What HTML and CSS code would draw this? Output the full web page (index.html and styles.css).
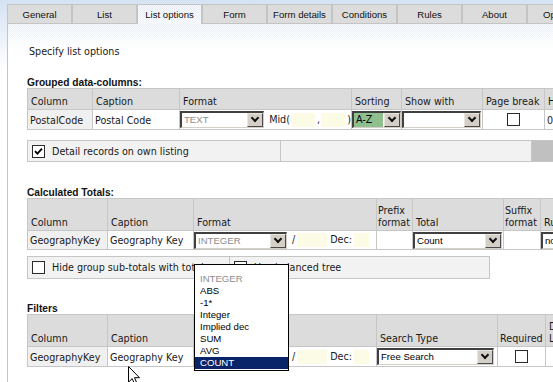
FILE: index.html
```html
<!DOCTYPE html>
<html lang="en">
<head>
  <meta charset="UTF-8" />
  <title>List options</title>
  <link rel="stylesheet" href="styles.css">
</head>
<body>
  <ul class="tabs">
    <li>General</li>
    <li>List</li>
    <li class="active">List options</li>
    <li>Form</li>
    <li>Form details</li>
    <li>Conditions</li>
    <li>Rules</li>
    <li>About</li>
    <li>Options</li>
  </ul>

  <div class="panel">
    <p class="intro">Specify list options</p>

    <h3>Grouped data-columns:</h3>
    <table class="grid grouped">
      <colgroup><col><col><col><col><col><col><col></colgroup>
      <tr class="head">
        <th>Column</th><th>Caption</th><th>Format</th><th>Sorting</th><th>Show with</th><th>Page break</th><th>Hide</th>
      </tr>
      <tr>
        <td class="key">PostalCode</td>
        <td>Postal Code</td>
        <td class="ctl">
          <div class="fmt">
            <span class="sel w87 dim"><span class="val">TEXT</span><span class="btn"></span></span>
            <span class="lbl">Mid(</span><span class="box b25"></span><span>,</span><span class="box b25"></span><span>)</span>
          </div>
        </td>
        <td class="ctl"><span class="sel w49 sort"><span class="val">A-Z</span><span class="btn"></span></span></td>
        <td class="ctl"><span class="sel w79"><span class="val"></span><span class="btn"></span></span></td>
        <td class="ctl mid"><span class="cb"></span></td>
        <td>0</td>
      </tr>
    </table>

    <table class="bar bar-detail">
      <tr>
        <td><label class="check"><span class="cb"><svg width="9" height="9" viewBox="0 0 9 9"><path d="M1 4.2 L3.4 6.6 L8 1.6" stroke="#000" stroke-width="1.8" fill="none"/></svg></span>Detail records on own listing</label></td>
        <td></td>
        <td class="shade"></td>
      </tr>
    </table>

    <h3 class="gap-totals">Calculated Totals:</h3>
    <table class="grid totals">
      <colgroup><col><col><col><col><col><col><col></colgroup>
      <tr class="head">
        <th>Column</th><th>Caption</th><th>Format</th><th>Prefix<br>format</th><th>Total</th><th>Suffix<br>format</th><th>Running</th>
      </tr>
      <tr>
        <td class="key">GeographyKey</td>
        <td>Geography Key</td>
        <td class="ctl">
          <div class="fmt">
            <span class="sel w93 dim"><span class="val">INTEGER</span><span class="btn"></span></span>
            <span class="lbl">/</span><span class="box b30"></span><span class="lbl dec">Dec:</span><span class="box b15"></span>
          </div>
        </td>
        <td></td>
        <td class="ctl"><span class="sel w89"><span class="val">Count</span><span class="btn"></span></span></td>
        <td></td>
        <td class="ctl"><span class="sel w60"><span class="val">none</span><span class="btn"></span></span></td>
      </tr>
    </table>

    <table class="bar bar-hide">
      <tr>
        <td><label class="check"><span class="cb"></span>Hide group sub-totals with totals</label></td>
        <td><label class="check"><span class="cb"></span>Use balanced tree</label></td>
      </tr>
    </table>

    <h3 class="gap-filters">Filters</h3>
    <table class="grid filters">
      <colgroup><col><col><col><col><col><col></colgroup>
      <tr class="head">
        <th>Column</th><th>Caption</th><th>Format</th><th>Search Type</th><th>Required</th><th>Drop<br>List</th>
      </tr>
      <tr>
        <td class="key">GeographyKey</td>
        <td>Geography Key</td>
        <td class="ctl">
          <div class="fmt">
            <span class="sel w93 dim"><span class="val">INTEGER</span><span class="btn"></span></span>
            <span class="lbl">/</span><span class="box b30"></span><span class="lbl dec">Dec:</span><span class="box b15"></span>
          </div>
        </td>
        <td class="ctl"><span class="sel w117"><span class="val">Free Search</span><span class="btn"></span></span></td>
        <td class="ctl mid"><span class="cb"></span></td>
        <td></td>
      </tr>
    </table>
  </div>

  <ul class="droplist">
    <li class="dim">INTEGER</li>
    <li>ABS</li>
    <li>-1*</li>
    <li>Integer</li>
    <li>Implied dec</li>
    <li>SUM</li>
    <li>AVG</li>
    <li class="on">COUNT</li>
  </ul>

  <svg class="cursor" width="13" height="20" viewBox="0 0 13 20">
    <path d="M0.5 0.5 V16.2 L4.2 12.6 L6.7 18.4 L9 17.4 L6.5 11.7 H11.5 Z" fill="#fff" stroke="#000" stroke-linejoin="miter"/>
  </svg>
</body>
</html>
```

FILE: styles.css
```css
html, body {
  margin: 0;
  overflow: hidden;
}
body {
  position: relative;
  height: 382px;
  background: linear-gradient(#d5e2f3, #ffffff 70px);
  font-family: "DejaVu Sans", sans-serif;
  font-size: 9.6px;
  color: #1a1a1a;
}

/* tab strip */
.tabs {
  display: flex;
  align-items: flex-end;
  list-style: none;
  margin: 0;
  padding: 4px 0 0 7px;
  white-space: nowrap;
}
.tabs li {
  flex: none;
  width: 63px;
  height: 18px;
  border: 1px solid #c4c4c4;
  border-bottom: 0;
  background: #dcdcdc;
  text-align: center;
  font: 9.6px/19px "Liberation Sans", sans-serif;
  color: #111;
}
.tabs li.active {
  position: relative;
  z-index: 1;
  height: 19px;
  margin-bottom: -1px;
  background:
    linear-gradient(rgba(255,255,255,0), rgba(255,255,255,0.4)),
    repeating-conic-gradient(#e3eaf4 0 25%, #f8fafd 0 50%) 0 0/2px 2px;
}

/* content panel */
.panel {
  height: 358px;
  margin-left: 7px;
  padding-left: 19px;
  border-top: 1px solid #c4c4c4;
  border-left: 1px solid #c4c4c4;
  background:
    linear-gradient(rgba(255,255,255,0.2), #ffffff 26px),
    repeating-conic-gradient(#e3eaf4 0 25%, #f8fafd 0 50%) 0 0/2px 2px;
}
.intro {
  margin: 22px 0 0 2px;
  line-height: 12px;
}
h3 {
  margin: 19px 0 0;
  font: bold 10.2px/11px "Liberation Sans", sans-serif;
  color: #111;
}
h3.gap-totals { margin-top: 25px; }
h3.gap-filters { margin-top: 24px; }

/* data grids */
.grid {
  border-collapse: collapse;
  table-layout: fixed;
}
.grid th, .grid td {
  border: 1px solid #c6c6c6;
  padding: 0 2px;
  white-space: nowrap;
  overflow: hidden;
  text-align: left;
  font-weight: normal;
  line-height: 12px;
}
.grid th {
  background: #dcdcdc;
  vertical-align: bottom;
  padding: 0 3px 1px 3px;
}
.grid td {
  height: 17px;
  padding-bottom: 2px;
  background: #fff;
  vertical-align: bottom;
}
.grid td.key { background: #f0f0f0; }
.grid td.ctl { padding: 0; vertical-align: middle; }
.grid td.mid { text-align: center; }

.grouped { width: 562px; }
.grouped .head th { height: 19px; }
.grouped col:nth-child(1) { width: 65px; }
.grouped col:nth-child(2) { width: 87px; }
.grouped col:nth-child(3) { width: 172px; }
.grouped col:nth-child(4) { width: 50px; }
.grouped col:nth-child(5) { width: 81px; }
.grouped col:nth-child(6) { width: 62px; }
.grouped col:nth-child(7) { width: 45px; }

.totals { width: 558px; }
.totals .head th { height: 30px; }
.totals td { height: 16px; }
.totals col:nth-child(1) { width: 80px; }
.totals col:nth-child(2) { width: 86px; }
.totals col:nth-child(3) { width: 183px; }
.totals col:nth-child(4) { width: 36px; }
.totals col:nth-child(5) { width: 91px; }
.totals col:nth-child(6) { width: 37px; }
.totals col:nth-child(7) { width: 45px; }
.totals .head th:nth-child(4),
.totals .head th:nth-child(6) { padding-left: 1px; padding-right: 0; }

.filters { width: 563px; }
.filters .head th { height: 30px; }
.filters col:nth-child(1) { width: 80px; }
.filters col:nth-child(2) { width: 86px; }
.filters col:nth-child(3) { width: 183px; }
.filters col:nth-child(4) { width: 121px; }
.filters col:nth-child(5) { width: 48px; }
.filters col:nth-child(6) { width: 45px; }
.filters .head th:nth-child(5) { padding-left: 2px; padding-right: 0; }

/* format cell: select + extra inputs */
.fmt {
  display: flex;
  align-items: center;
}
.fmt .lbl { margin-left: 5px; }
.fmt .dec { margin: 0 2px 0 3px; }
.box {
  display: inline-block;
  height: 14px;
  background: #fcfbe6;
}
.b25 { width: 25px; margin: 0 2px 0 1px; }
.b30 { width: 30px; margin-left: 2px; }
.b15 { width: 15px; }

/* classic combo box */
.sel {
  display: inline-flex;
  vertical-align: middle;
  box-sizing: border-box;
  height: 17px;
  border-style: solid;
  border-width: 2px 1px 1px 2px;
  border-color: #404040 #d4d0c8 #d4d0c8 #404040;
  background: #fff;
  font: 9.6px/14px "Liberation Sans", sans-serif;
  color: #000;
}
.sel .val {
  flex: 1;
  padding-left: 2px;
  overflow: hidden;
}
.sel.dim .val { color: #8c8c8c; }
.sel.sort .val {
  background: #8fbf8f;
  font-family: "DejaVu Sans", sans-serif;
  margin-right: 1px;
}
.sel .btn {
  flex: none;
  position: relative;
  width: 16px;
  box-sizing: border-box;
  border: 1px solid #4a4a4a;
  border-top-color: #e8e6e0;
  border-left-color: #e8e6e0;
  background: #d4d0c8;
}
.sel .btn::after {
  content: "";
  position: absolute;
  left: 4px;
  top: 1px;
  width: 4px;
  height: 4px;
  border-right: 2px solid #111;
  border-bottom: 2px solid #111;
  transform: rotate(45deg);
}
.w87 { width: 87px; }
.w49 { width: 49px; }
.w79 { width: 79px; }
.w93 { width: 93px; }
.w89 { width: 89px; }
.w60 { width: 60px; }
.w117 { width: 117px; }

/* checkboxes */
.cb {
  display: inline-flex;
  align-items: center;
  justify-content: center;
  vertical-align: middle;
  width: 11px;
  height: 11px;
  border: 1px solid #2a2a2a;
  background: #fff;
}
.check {
  display: flex;
  align-items: center;
  white-space: nowrap;
}
.check .cb { margin-right: 7px; }

/* option bars */
.bar {
  border-collapse: collapse;
  table-layout: fixed;
  background: #f2f2f2;
}
.bar td {
  height: 20px;
  padding: 0 0 0 4px;
  border: 1px solid #c6c6c6;
  overflow: hidden;
}
.bar-detail { margin-top: 10px; width: 600px; }
.bar-detail td:nth-child(1) { width: 248px; }
.bar-detail td:nth-child(2) { width: 246px; }
.bar-detail td.shade { background: #c0c0c0; }
.bar-hide { margin-top: 6px; width: 463px; }
.bar-hide td { height: 21px; }
.bar-hide td:nth-child(1) { width: 197px; }

/* open dropdown list */
.droplist {
  position: absolute;
  left: 194px;
  top: 264px;
  width: 93px;
  height: 97px;
  margin: 0;
  padding: 8px 0 0;
  list-style: none;
  border: 1px solid #000;
  background: #fff;
  font: 9.6px/12px "Liberation Sans", sans-serif;
  color: #000;
}
.droplist li { padding-left: 5px; }
.droplist li.dim { color: #8c8c8c; }
.droplist li.on { background: #0a246a; color: #fff; }

.cursor {
  position: absolute;
  left: 128px;
  top: 366px;
}
```
